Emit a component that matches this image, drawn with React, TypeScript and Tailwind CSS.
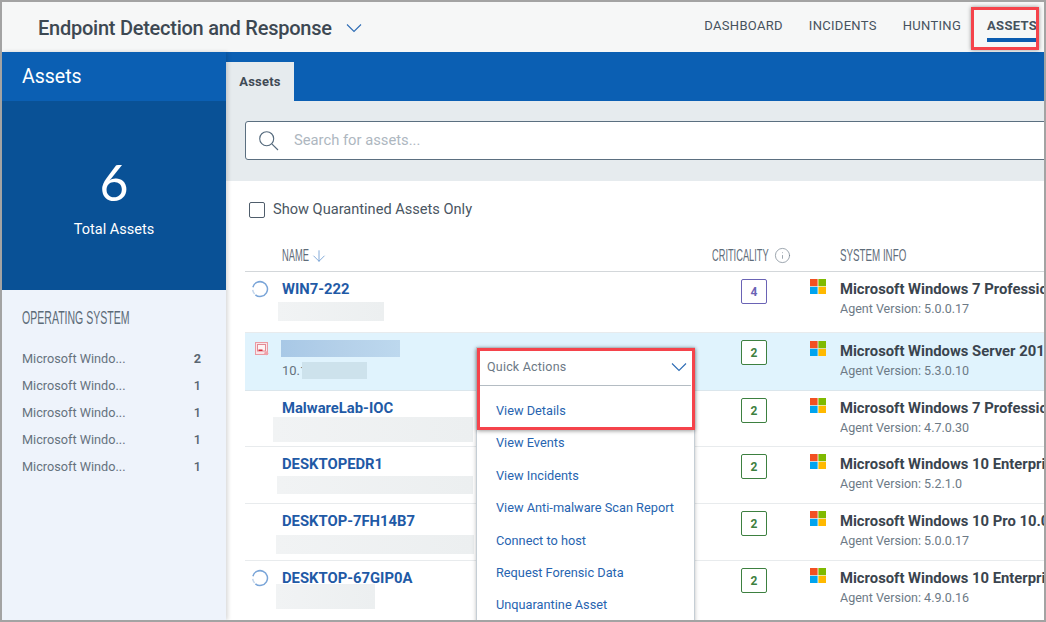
import { ArrowDown, Info } from "lucide-react";

const osList = [2, 1, 1, 1, 1];

const rows = [
  { name: "WIN7-222", crit: 4, sys: "Microsoft Windows 7 Professional", agent: "5.0.0.17", status: "spin", h: "h-[61px]", sysTop: "pt-[7px]", blur: "ml-[-4px] w-[106px] h-[19px] mt-[3px]" },
  { name: "", crit: 2, sys: "Microsoft Windows Server 2016", agent: "5.3.0.10", status: "quarantine", h: "h-[58px]", sysTop: "pt-[8px]", blur: "" },
  { name: "MalwareLab-IOC", crit: 2, sys: "Microsoft Windows 7 Professional", agent: "4.7.0.30", status: "", h: "h-[56px]", sysTop: "pt-[7px]", blur: "ml-[-9px] w-[200px] h-[25px] mt-[-1px]" },
  { name: "DESKTOPEDR1", crit: 2, sys: "Microsoft Windows 10 Enterprise", agent: "5.2.1.0", status: "", h: "h-[57px]", sysTop: "pt-[7px]", blur: "ml-[-5px] w-[196px] h-[18px] mt-[2px]" },
  { name: "DESKTOP-7FH14B7", crit: 2, sys: "Microsoft Windows 10 Pro 10.0", agent: "5.0.0.17", status: "", h: "h-[57px]", sysTop: "pt-[7px]", blur: "ml-[-6px] w-[198px] h-[19px] mt-[4px]" },
  { name: "DESKTOP-67GIP0A", crit: 2, sys: "Microsoft Windows 10 Enterprise", agent: "4.9.0.16", status: "spin", h: "h-[62px]", sysTop: "pt-[7px]", blur: "ml-[-6px] w-[99px] h-[25px] mt-[-4px]" },
];

const actions = ["View Details", "View Events", "View Incidents", "View Anti-malware Scan Report", "Connect to host", "Request Forensic Data", "Unquarantine Asset"];

function Caret() {
  return (
    <svg width="16" height="10" viewBox="0 0 16 10" fill="none" className="shrink-0">
      <path d="M1 1.5L8 8.5L15 1.5" stroke="#2d6cb5" strokeWidth="1.1" />
    </svg>
  );
}

function SearchGlyph() {
  return (
    <svg width="20" height="20" viewBox="0 0 20 20" fill="none" className="shrink-0">
      <circle cx="7.7" cy="7.7" r="7" stroke="#54697c" strokeWidth="1.1" />
      <path d="M12.8 12.8L19 19" stroke="#54697c" strokeWidth="1.1" />
    </svg>
  );
}

function WindowsLogo() {
  return (
    <svg width="16" height="15" viewBox="0 0 16 15" className="shrink-0">
      <rect x="0" y="0" width="7.6" height="7.2" fill="#f25022" />
      <rect x="8.4" y="0" width="7.6" height="7.2" fill="#7fba00" />
      <rect x="0" y="7.8" width="7.6" height="7.2" fill="#00a4ef" />
      <rect x="8.4" y="7.8" width="7.6" height="7.2" fill="#ffb900" />
    </svg>
  );
}

function SpinIcon() {
  return (
    <svg width="18" height="18" viewBox="0 0 18 18" fill="none">
      <path d="M1.9 7.2A7.4 7.4 0 1 1 4.4 14.8" stroke="#7aa5d8" strokeWidth="1.5" />
      <path d="M3.6 14A7.4 7.4 0 0 1 1.7 9.8" stroke="#c3d6ec" strokeWidth="1.5" />
    </svg>
  );
}

function QuarantineIcon() {
  return (
    <svg width="14" height="14" viewBox="0 0 14 14" fill="none">
      <rect x="0.5" y="0.5" width="12" height="12" fill="#f9e4e8" stroke="#eb9aa2" />
      <rect x="2.5" y="2.5" width="8" height="6.5" fill="#fdf3f4" stroke="#e28a94" />
      <rect x="3.5" y="7.5" width="4" height="1.5" fill="#d92b3a" />
      <circle cx="11.3" cy="11.3" r="2" fill="#f0a0a8" />
    </svg>
  );
}

export default function App() {
  return (
    <div className="w-[1046px] h-[622px] overflow-hidden border-2 border-[#a3a3a3] flex flex-col bg-white relative font-['Roboto',sans-serif]">
      {/* top bar */}
      <header className="h-[50px] shrink-0 bg-[#f6f7f7] flex items-center justify-between pl-[36px] pr-[7px]">
        <div className="flex items-center gap-[14px] pt-[2px]">
          <h1 className="text-[20px] font-medium text-[#3d4852] tracking-[-0.25px]">Endpoint Detection and Response</h1>
          <Caret />
        </div>
        <nav className="flex items-start gap-[26px] text-[13px] leading-[20px] tracking-[0.3px] text-[#46525e] h-full pt-[14px]">
          <span>DASHBOARD</span>
          <span>INCIDENTS</span>
          <span>HUNTING</span>
          <span className="font-bold flex flex-col">
            ASSETS
            <span className="block h-[4px] bg-[#0b5cb0] mt-[2px]" />
          </span>
        </nav>
      </header>

      <div className="flex flex-1 min-h-0">
        {/* left panel */}
        <aside className="w-[224px] shrink-0 flex flex-col bg-[#eef3fb] shadow-[2px_0_4px_rgba(0,0,0,0.15)] z-10">
          <div className="h-[49px] bg-[#0b5fb3] text-white text-[19.5px] pl-[20px] pt-[10px]">Assets</div>
          <div className="h-[189px] bg-[#095196] text-white flex flex-col items-center pt-[51px]">
            <div className="text-[50px] leading-[60px] font-['Lato',sans-serif]">6</div>
            <div className="text-[14.5px] mt-[7px]">Total Assets</div>
          </div>
          <div className="pl-[20px] pr-[25px] pt-[18px]">
            <h2 className="text-[19px] leading-[20px] font-normal text-[#5c6b78] mb-[17px] font-['Liberation_Sans',sans-serif]">
              <span className="inline-block origin-left scale-x-[0.555] whitespace-nowrap">OPERATING SYSTEM</span>
            </h2>
            <ul>
              {osList.map((n, i) => (
                <li key={i} className="flex justify-between items-center h-[27px] text-[12.7px] text-[#66727e]">
                  <span>Microsoft Windo...</span>
                  <span className={n === 2 ? "font-bold text-[#5a6671]" : "font-medium text-[#5a6671]"}>{n}</span>
                </li>
              ))}
            </ul>
          </div>
        </aside>

        {/* main */}
        <main className="flex-1 min-w-0 flex flex-col overflow-hidden">
          <div className="h-[49px] shrink-0 bg-[#0b5fb3] flex items-end">
            <div className="w-[68px] h-[39px] bg-[#e6ebee] text-[13px] font-bold tracking-[0.2px] text-[#3f4a55] flex items-center justify-center">Assets</div>
          </div>
          <div className="h-[80px] shrink-0 bg-[#e6ebee] pl-[19px] pt-[20px]">
            <div className="w-[900px] h-[39px] bg-white border border-[#5b6f80] rounded-[3px] flex items-center pl-[13px] gap-[15px]">
              <SearchGlyph />
              <span className="text-[14.75px] text-[#aeb7bf]">Search for assets...</span>
            </div>
          </div>
          <div className="pl-[19px] flex-1 min-h-0">
            <label className="flex items-center gap-[8px] pl-[4px] pt-[2px] h-[56px]">
              <span className="w-[16px] h-[16px] border border-[#4f5d6b] rounded-[2px] bg-white" />
              <span className="text-[14.6px] text-[#4a5662]">Show Quarantined Assets Only</span>
            </label>
            <div className="w-[900px] grid grid-cols-[37px_430px_98px_30px_1fr] items-center h-[35px] pt-[3px] border-b border-[#d3d7da] font-['Liberation_Sans',sans-serif] text-[17px] text-[#5f6d7a]">
              <span />
              <span className="flex items-center gap-[2px]">
                <span className="w-[26px] whitespace-nowrap"><span className="inline-block origin-left scale-x-[0.55]">NAME</span></span>
                <ArrowDown className="w-[18px] h-[18px] text-[#5b8fcb]" strokeWidth={1} />
              </span>
              <span className="flex items-center gap-[6px]">
                <span className="w-[56px] whitespace-nowrap"><span className="inline-block origin-left scale-x-[0.545]">CRITICALITY</span></span>
                <Info className="w-[17px] h-[17px] text-[#76838f]" strokeWidth={1} />
              </span>
              <span />
              <span className="whitespace-nowrap"><span className="inline-block origin-left scale-x-[0.575]">SYSTEM INFO</span></span>
            </div>
            {rows.map((r, i) => {
              const selected = r.status === "quarantine";
              return (
                <div key={i} className={`w-[900px] grid grid-cols-[37px_430px_98px_30px_1fr] items-start border-b ${r.h} ${selected ? "bg-[#e0f3fd] border-[#dbe6ec]" : "border-[#e8ebed]"}`}>
                  <div className="pl-[6px] pt-[8px] h-full">
                    {r.status === "spin" && <SpinIcon />}
                    {r.status === "quarantine" && <span className="block pl-[4px] pt-[1px]"><QuarantineIcon /></span>}
                  </div>
                  <div className="pt-[7px]">
                    {selected ? (
                      <>
                        <div className="w-[119px] h-[17px] bg-gradient-to-r from-[#a8c8e6] via-[#b4d0e9] to-[#bdd8ee] ml-[-1px]" />
                        <div className="flex items-center h-[17px] mt-[5px] text-[13px] text-[#66727e]">
                          <span className="w-[20px] overflow-hidden whitespace-nowrap">10.1</span><span className="w-[65px] h-[17px] bg-[#cde2ec]" />
                        </div>
                      </>
                    ) : (
                      <>
                        <div className="text-[14.8px] leading-[20px] font-bold text-[#1f5aa6]">{r.name}</div>
                        <div className={`bg-gradient-to-r from-[#f1f3f4] to-[#eceff0] ${r.blur}`} />
                      </>
                    )}
                  </div>
                  <div className="pl-[29px] pt-[7px]">
                    <span className={`w-[26px] h-[25px] flex items-center justify-center border rounded-[2px] text-[12px] font-bold bg-white ${r.crit === 4 ? "border-[#6a63b5] text-[#6a63b5]" : "border-[#3d8040] text-[#3d8040]"}`}>{r.crit}</span>
                  </div>
                  <div className={r.sysTop}><WindowsLogo /></div>
                  <div className={`${r.sysTop} whitespace-nowrap overflow-hidden`}>
                    <div className="text-[14.8px] leading-[20px] font-bold text-[#3a444e]">{r.sys}</div>
                    <div className="text-[12.5px] leading-[20px] text-[#6d7a86]">Agent Version: {r.agent}</div>
                  </div>
                </div>
              );
            })}
          </div>
        </main>
      </div>

      {/* quick actions menu */}
      <div className="absolute left-[474px] top-[345px] w-[219px] h-[280px] bg-white border border-[#c5ced5] shadow-[0_1px_4px_rgba(0,0,0,0.25)] z-20">
        <div className="h-[38px] mx-[3px] pt-[1px] border-b border-[#b4bcc3] flex items-center justify-between pl-[7px] pr-[4px]">
          <span className="text-[12.5px] tracking-[0.2px] text-[#6c7985]">Quick Actions</span>
          <Caret />
        </div>
        <ul className="pl-[19px] pt-[16px] text-[12.75px] text-[#2764b0]">
          {actions.map((a) => (
            <li key={a} className="h-[32.4px] leading-[18px]">{a}</li>
          ))}
        </ul>
      </div>

      {/* annotation boxes */}
      <div className="absolute left-[475px] top-[346px] w-[218px] h-[82px] border-[3px] border-[#f5434b] shadow-[0_1px_4px_rgba(0,0,0,0.4)] z-30" />
      <div className="absolute left-[969px] top-[5px] w-[68px] h-[43px] border-[3px] border-[#f5434b] shadow-[0_0_4px_rgba(0,0,0,0.4)] z-30" />
    </div>
  );
}
